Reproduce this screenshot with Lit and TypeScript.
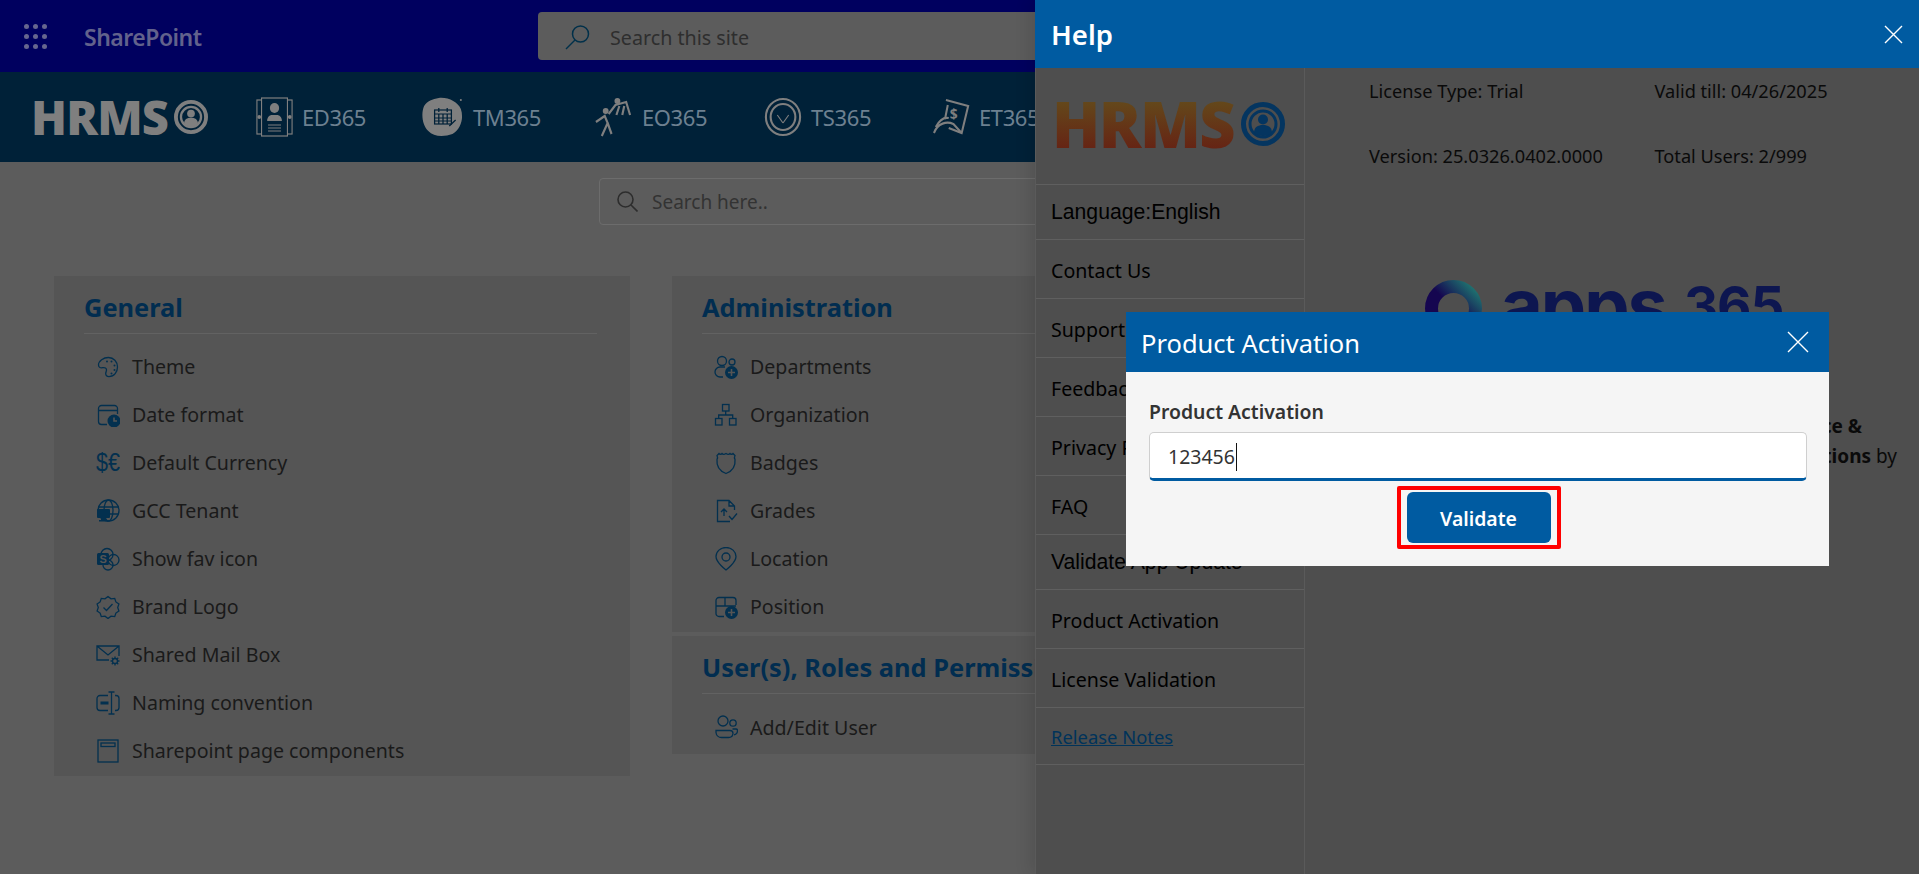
import { LitElement, html, css, svg } from 'lit';
import { customElement } from 'lit/decorators.js';

const icons: Record<string, unknown> = {
  theme: svg`<path d="M12.500 2.500c-5 0-10 3.300-10 7.600 0 2.600 2.200 3 4.200 2.600 2.200-.4 3.800.3 3.800 2.400 0 1.300-.8 2.100-.8 3.500 0 2 1.400 3 3.300 3 5.200 0 8.500-4.700 8.500-9.600 0-5.400-3.900-9.500-9-9.500z"/><g class="solid"><circle cx="11" cy="6.500" r="1"/><circle cx="15.500" cy="6.500" r="1"/><circle cx="18.500" cy="10.500" r="1"/><circle cx="18.500" cy="15" r="1"/><circle cx="15.500" cy="18.500" r="1"/></g>`,
  date: svg`<path d="M21.500 11V5.500a3 3 0 0 0-3-3h-13a3 3 0 0 0-3 3v13a3 3 0 0 0 3 3H11M2.500 7.500h19"/><circle class="solid" cx="18" cy="18" r="6.500"/><path class="cut" d="M18 14.500V18h3"/>`,
  currency: svg`<text class="glyph" x="0" y="20" font-size="26" textLength="24" lengthAdjust="spacingAndGlyphs">$€</text>`,
  globe: svg`<circle cx="12.500" cy="11.500" r="10.500"/><ellipse cx="12.500" cy="11.500" rx="4.500" ry="10.500"/><path d="M2 8h21M2.500 15h20"/><rect class="solid" x="1" y="10" width="13" height="9" rx="1"/><path class="solid" d="M5 19h5v2h2v1.500H3V21h2z"/>`,
  favicon: svg`<circle cx="11" cy="7.500" r="6"/><circle cx="17.500" cy="13" r="5.500"/><circle cx="12" cy="18" r="5"/><rect class="solid" x="1" y="6" width="12" height="12" rx="1.500"/><text class="cutglyph" x="3.500" y="16" font-size="11">S</text>`,
  badge: svg`<path d="M12 1.500l3 2.300 3.700-.4 1.200 3.500 3 2.200-1.200 3.400 1.200 3.400-3 2.200-1.200 3.500-3.700-.4-3 2.300-3-2.300-3.700.4-1.200-3.500-3-2.200 1.200-3.400-1.200-3.400 3-2.200 1.200-3.500 3.700.4z"/><path d="M7.500 12.500l3 3 6-6.500"/>`,
  mail: svg`<path d="M23 13V3H1v14h12M1 3l11 9 11-9"/><g><circle cx="19" cy="18" r="2.500"/><path d="M19 13.500v2M19 20.500v2M14.500 18h2M21.500 18h2M15.800 14.800l1.400 1.400M20.800 19.800l1.400 1.400M15.800 21.200l1.400-1.400M20.800 16.200l1.400-1.400"/></g>`,
  naming: svg`<path d="M12 4.500H4a3 3 0 0 0-3 3v9a3 3 0 0 0 3 3h8M19 4.500h1a3 3 0 0 1 3 3v9a3 3 0 0 1-3 3h-1M12.500 1h6M12.500 23h6M15.500 1v22"/><rect class="solid" x="4.500" y="10.500" width="8" height="3"/>`,
  page: svg`<rect x="2" y="1" width="20" height="22"/><rect x="5" y="4" width="14" height="3.500"/>`,
  departments: svg`<circle cx="8" cy="6" r="4.500"/><circle cx="18" cy="7" r="3"/><path d="M9 22H6a5 5 0 0 1 0-10h5"/><circle class="solid" cx="17.500" cy="17.500" r="6.500"/><path class="cut" d="M17.500 14v7M14 17.500h7"/>`,
  org: svg`<rect x="8.500" y="1.500" width="6.500" height="6.500"/><rect x="1.500" y="15.500" width="6.500" height="6.500"/><rect x="15.500" y="15.500" width="6.500" height="6.500"/><path d="M11.700 8v4M4.700 15.500V12h14v3.500"/>`,
  shield: svg`<path d="M5 2.500c1 1 2 1 3 0 1 1 2.500 1 4 0 1.500 1 3 1 4 0 1 1 2 1 3 0l2 2c-.8 1.500-.8 2.500 0 4 .6 6-2.500 11.500-9 14-6.500-2.500-9.600-8-9-14 .8-1.500.8-2.500 0-4z"/>`,
  grades: svg`<path d="M20.500 11V7l-5.500-5.500H3.500v21H16M15 1.500V7h5.500M10 17v-6.500M7 13l3-3 3 3M15 17l3 3.500 5-6"/>`,
  location: svg`<path d="M12 23S2 15.500 2 9.500a10 9 0 0 1 20 0C22 15.500 12 23 12 23z"/><circle cx="12" cy="10" r="4"/>`,
  position: svg`<path d="M10 21.500H5a3 3 0 0 1-3-3v-13a3 3 0 0 1 3-3h14a3 3 0 0 1 3 3V10M2 11h20M11 2.500V11"/><circle class="solid" cx="17.500" cy="17.500" r="6.500"/><path class="cut" d="M17.500 14v7M14 17.500h7"/>`,
  users: svg`<circle cx="9" cy="6" r="5"/><circle cx="19" cy="8" r="3.200"/><path d="M2 15.500h14a3 3 0 0 1 3 3 4.500 4.500 0 0 1-4.500 4h-7A5.500 5.500 0 0 1 2 17.500zM18.500 14H22a1.500 1.500 0 0 1 1.500 1.500c0 2.500-1.500 4-3.500 4.300"/>`,
};

const general = [
  ['theme', 'Theme'], ['date', 'Date format'], ['currency', 'Default Currency'], ['globe', 'GCC Tenant'],
  ['favicon', 'Show fav icon'], ['badge', 'Brand Logo'], ['mail', 'Shared Mail Box'],
  ['naming', 'Naming convention'], ['page', 'Sharepoint page components'],
];
const administration = [
  ['departments', 'Departments'], ['org', 'Organization'], ['shield', 'Badges'],
  ['grades', 'Grades'], ['location', 'Location'], ['position', 'Position'],
];
const helpLinks = [
  'Language:English', 'Contact Us', 'Support', 'Feedback', 'Privacy Policy', 'FAQ',
  'Validate App Update', 'Product Activation', 'License Validation',
];

// name, drawn width of the icon, art
const apps: [string, number, unknown][] = [
  ['ED365', 37, svg`<rect x="1" y="3" width="8" height="34"/><rect x="31" y="3" width="8" height="34"/><rect x="6" y="1" width="28" height="38" fill="#002138"/><circle class="f" cx="20" cy="11" r="5"/><path class="f" d="M12 24c0-4 3-6 5-6h6c2 0 5 2 5 6z"/><path d="M13 28h14M13 31h14M13 34h14"/><circle class="f" cx="3.500" cy="20" r="2"/><circle class="f" cx="36.500" cy="20" r="2"/>`],
  ['TM365', 42, svg`<path class="f" d="M16 1c9-1 18 4 21 11 3 9 0 20-8 25-8 3-18 3-23-3C0 28-1 16 2 9 5 4 10 2 16 1z"/><circle class="f" cx="37" cy="3" r="1"/><g stroke="#002138"><rect x="12" y="13" width="16" height="14" fill="none"/><path d="M12 17h16M16 11v4M24 11v4M12 21h16M12 24h16M16 17v10M20 17v10M24 17v10M26 29l6-6"/></g>`],
  ['EO365', 39, svg`<circle class="f" cx="12" cy="14" r="3"/><path class="w" d="M2 25l9-6 3 7-6 13M14 26l4 11"/><circle class="f" cx="24" cy="4" r="3"/><path class="w" d="M15 17l7-9 11-3 4 13M26 9l-3 9M31 9l-2 9"/>`],
  ['TS365', 38, svg`<circle class="w" cx="20" cy="20" r="18"/><circle class="w" cx="20" cy="20" r="13"/><path d="M20 26l-6-8M20 26l6-8"/>`],
  ['ET365', 37, svg`<path class="w" d="M14 3l24 6-7 27-14-5M13 22l3-14"/><text class="t" x="18" y="22" font-size="15">$</text><path class="w" d="M1 36c4-10 14-12 21-9l8 8M3 30c4-7 9-10 14-9"/>`],
];

const personCircle = svg`<circle cx="22" cy="22" r="19.500" fill="none" stroke-width="5"/><circle cx="22" cy="22" r="13" fill="none" stroke-width="3"/><circle class="p" cx="22" cy="17.500" r="5"/><path class="p" d="M13 31c0-6 4-8 9-8s9 2 9 8c-2 2-5 3-9 3s-7-1-9-3z"/>`;

@customElement('app-root')
export class AppRoot extends LitElement {
  static styles = css`
    :host {
      display: block;
      position: relative;
      width: 1919px;
      height: 874px;
      overflow: hidden;
      background: #5c5c5c;
      font-family: 'Noto Sans', sans-serif;
    }
    * {
      box-sizing: border-box;
    }
    svg {
      display: block;
      flex: none;
    }

    .suitebar {
      display: flex;
      align-items: center;
      height: 72px;
      background: #00005f;
    }
    .waffle {
      display: grid;
      grid-template-columns: repeat(3, 4px);
      gap: 5px;
      margin: 0 38px 0 24px;
    }
    .waffle i {
      width: 5px;
      height: 5px;
      border-radius: 50%;
      background: #66668f;
    }
    .brand {
      width: 454px;
      padding-top: 2px;
      color: #62628c;
      font-size: 23px;
      font-weight: 600;
      letter-spacing: -0.5px;
    }
    .sitesearch {
      display: flex;
      align-items: center;
      gap: 20px;
      width: 640px;
      height: 48px;
      padding: 2px 0 0 27px;
      border-radius: 4px;
      background: #5c5c5c;
      color: #2e2e2e;
      font-size: 19.700px;
    }
    .sitesearch svg {
      stroke: #00304a;
      fill: none;
      stroke-width: 1.500;
    }

    .appbar {
      display: flex;
      align-items: center;
      height: 90px;
      padding-left: 31px;
      background: #002138;
      color: #6d8090;
      overflow: hidden;
    }
    .hrms {
      display: flex;
      align-items: center;
      width: 225px;
      gap: 6px;
    }
    .hrms b {
      font-family: 'Open Sans', sans-serif;
      font-size: 47px;
      line-height: 1;
      font-weight: 800;
      letter-spacing: -0.800px;
      color: #7f7f7f;
    }
    .hrms svg {
      stroke: #7f7f7f;
    }
    .hrms .p {
      fill: #7f7f7f;
      stroke: none;
    }
    .app {
      display: flex;
      align-items: center;
      gap: 9px;
      width: 169px;
      flex: none;
      font-size: 22px;
      letter-spacing: -0.400px;
    }
    .app:nth-of-type(2) {
      width: 166px;
    }
    .app:nth-of-type(3) {
      width: 172px;
    }
    .app:nth-of-type(4) {
      width: 170px;
    }
    .app svg {
      fill: none;
      stroke: #7f7f7f;
      stroke-width: 1.200;
    }
    .app .w {
      stroke-width: 2.200;
    }
    .app .f {
      fill: #7f7f7f;
      stroke: none;
    }
    .app .t {
      fill: #7f7f7f;
      stroke: none;
      font-weight: 700;
    }

    .findrow {
      height: 114px;
      padding: 16px 0 0 599px;
    }
    .find {
      display: flex;
      align-items: center;
      gap: 14px;
      width: 740px;
      height: 47px;
      padding-left: 17px;
      border: 1px solid #6c6c6c;
      border-radius: 4px;
      color: #333;
      font-size: 19px;
    }
    .find svg {
      fill: none;
      stroke: #2d2d2d;
      stroke-width: 1.600;
    }

    .columns {
      display: grid;
      grid-template-columns: 576px 576px;
      gap: 42px;
      padding-left: 54px;
      align-items: start;
    }
    .stack {
      display: flex;
      flex-direction: column;
      gap: 4px;
    }
    .card {
      padding: 0 33px 1px 30px;
      background: #555;
    }
    .stack .card:last-child {
      padding-bottom: 3px;
    }
    .stack .card:last-child .row span {
      margin-bottom: 0;
    }
    .card h2 {
      display: flex;
      align-items: center;
      height: 58px;
      margin: 0 0 9px;
      padding-top: 5px;
      border-bottom: 1px solid #626262;
      color: #012d50;
      font-size: 25.400px;
      font-weight: 700;
      white-space: nowrap;
    }
    .row {
      display: flex;
      align-items: center;
      gap: 12px;
      height: 48px;
      padding-left: 12px;
      color: #1a1a1a;
      font-size: 19.600px;
    }
    .row span {
      margin-bottom: 2px;
    }
    .row svg {
      fill: none;
      stroke: #03304f;
      stroke-width: 1.300;
    }
    .row svg .solid {
      fill: #03304f;
      stroke: none;
    }
    .row svg .cut {
      stroke: #555;
      stroke-width: 1.600;
    }
    .row svg .glyph {
      fill: #03304f;
      stroke: none;
      font-family: 'Liberation Sans', sans-serif;
    }
    .row svg .cutglyph {
      fill: #555;
      stroke: none;
      font-weight: 700;
      font-family: 'Liberation Sans', sans-serif;
    }

    .panel {
      position: absolute;
      top: 0;
      right: 0;
      bottom: 0;
      left: 1035px;
      display: flex;
      flex-direction: column;
      background: #4e4e4e;
      box-shadow: -6px 0 14px rgba(0, 0, 0, 0.1);
    }
    .panel > header {
      display: flex;
      align-items: center;
      justify-content: space-between;
      flex: none;
      height: 68px;
      padding: 0 16px;
      background: #005ba1;
      color: #fff;
      font-size: 27.500px;
      font-weight: 600;
    }
    .panel-body {
      display: flex;
      flex: 1;
    }
    .side {
      flex: none;
      width: 270px;
      border-left: 1px solid #5a5a5a;
      border-right: 1px solid #5a5a5a;
    }
    .sidelogo {
      display: flex;
      align-items: center;
      gap: 7px;
      height: 117px;
      padding: 0 0 5px 16px;
      border-bottom: 1px solid #5f5f5f;
    }
    .sidelogo b {
      font-family: 'Open Sans', sans-serif;
      font-size: 63px;
      line-height: 1;
      font-weight: 800;
      letter-spacing: -1.500px;
      color: transparent;
      background: linear-gradient(#634f1c, #661f13);
      background-clip: text;
      -webkit-background-clip: text;
    }
    .sidelogo svg {
      stroke: #043560;
    }
    .sidelogo .p {
      fill: #043560;
      stroke: none;
    }
    .sidelink {
      display: flex;
      align-items: center;
      height: 59px;
      padding: 2px 0 0 15px;
      border-bottom: 1px solid #5f5f5f;
      color: #000;
      font-size: 19.600px;
    }
    .sidelink.arial {
      height: 55px;
      padding-top: 0;
      font-family: 'Liberation Sans', sans-serif;
      font-size: 21.200px;
    }
    .sidelink.notes {
      height: 57px;
      padding-top: 0;
      color: #00335a;
      text-decoration: underline;
      font-size: 18.400px;
    }

    .about {
      flex: 1;
      padding: 10px 22px 0 64px;
      color: #0a0a0a;
      font-size: 18.200px;
    }
    .facts {
      display: grid;
      grid-template-columns: 285.500px auto;
      row-gap: 39px;
      line-height: 26px;
    }
    .wordmark {
      display: flex;
      align-items: flex-start;
      height: 131px;
      margin: 111px 0 0 56px;
      color: #0d1650;
      font-family: 'Inter', sans-serif;
      font-weight: 700;
      line-height: 1;
    }
    .wordmark svg {
      margin-right: 19px;
    }
    .wordmark span {
      font-size: 72px;
      margin: -11px 18px 0 0;
      letter-spacing: -2px;
    }
    .wordmark em {
      font-style: normal;
      font-size: 53px;
      letter-spacing: -1px;
    }
    .pitch {
      margin: 0;
      text-align: right;
      font-size: 19px;
      line-height: 30px;
    }
    .pitch .first {
      margin-right: 35px;
      font-weight: 700;
    }

    .modal {
      position: absolute;
      top: 312px;
      left: 1126px;
      width: 703px;
      height: 254px;
      background: #f5f5f5;
    }
    .modal > header {
      display: flex;
      align-items: center;
      justify-content: space-between;
      height: 60px;
      padding: 2px 20px 0 15px;
      background: #005ba1;
      color: #fff;
      font-size: 25.500px;
    }
    .modal > header svg {
      margin-top: -2px;
    }
    .modal-body {
      display: flex;
      flex-direction: column;
      padding: 27px 22px 0 23px;
    }
    .modal label {
      margin-bottom: 7px;
      color: #333;
      font-size: 19.400px;
      line-height: 26px;
      font-weight: 600;
    }
    .field {
      display: flex;
      align-items: center;
      height: 49px;
      padding: 2px 0 0 18px;
      border: 1px solid #cfcfcf;
      border-bottom: 3px solid #005ba1;
      border-radius: 5px;
      background: #fff;
      color: #333;
      font-size: 19.500px;
    }
    .caret {
      width: 1px;
      height: 28px;
      margin-left: 1px;
      background: #111;
    }
    .actions {
      display: flex;
      justify-content: center;
      margin-top: 5px;
      padding-left: 1px;
    }
    .highlight {
      padding: 2px 6px;
      border: 4px solid #f00;
      border-radius: 2px;
    }
    .highlight button {
      display: block;
      width: 144px;
      height: 51px;
      padding: 2px 0 0;
      border: 0;
      border-radius: 6px;
      background: #005ba1;
      color: #fff;
      font: 600 19.400px 'Noto Sans', sans-serif;
    }
    .x {
      stroke: #fff;
      stroke-width: 1.400;
      fill: none;
    }
  `;

  private renderRow(item: string[]) {
    return html`<div class="row">
      <svg width="24" height="24" viewBox="0 0 24 24">${icons[item[0]]}</svg>
      <span>${item[1]}</span>
    </div>`;
  }

  render() {
    return html`
      <div class="suitebar">
        <div class="waffle">${Array.from({ length: 9 }, () => html`<i></i>`)}</div>
        <div class="brand">SharePoint</div>
        <div class="sitesearch">
          <svg width="25" height="25" viewBox="0 0 25 25"><circle cx="15.500" cy="9" r="8"/><path d="M10 15L1 24"/></svg>
          Search this site
        </div>
      </div>
      <div class="appbar">
        <div class="hrms">
          <b>HRMS</b>
          <svg width="34" height="36" viewBox="0 0 44 44">${personCircle}</svg>
        </div>
        ${apps.map(
          ([name, width, art]) => html`<div class="app">
            <svg width=${width} height="40" viewBox="0 0 40 40" preserveAspectRatio="none">${art}</svg>
            <span>${name}</span>
          </div>`,
        )}
      </div>
      <div class="findrow">
        <div class="find">
          <svg width="21" height="21" viewBox="0 0 21 21"><circle cx="8.500" cy="8.500" r="7.500"/><path d="M14 14l6.500 6.500"/></svg>
          Search here..
        </div>
      </div>
      <div class="columns">
        <section class="card">
          <h2>General</h2>
          ${general.map((item) => this.renderRow(item))}
        </section>
        <div class="stack">
          <section class="card">
            <h2>Administration</h2>
            ${administration.map((item) => this.renderRow(item))}
          </section>
          <section class="card">
            <h2>User(s), Roles and Permissions</h2>
            ${this.renderRow(['users', 'Add/Edit User'])}
          </section>
        </div>
      </div>

      <aside class="panel">
        <header>
          Help
          <svg class="x" width="19" height="19" viewBox="0 0 19 19"><path d="M1 1l17 17M18 1L1 18"/></svg>
        </header>
        <div class="panel-body">
          <nav class="side">
            <div class="sidelogo">
              <b>HRMS</b>
              <svg width="44" height="44" viewBox="0 0 44 44">${personCircle}</svg>
            </div>
            ${helpLinks.map(
              (link) =>
                html`<div class="sidelink ${link === 'Language:English' || link === 'Validate App Update' ? 'arial' : ''}">${link}</div>`,
            )}
            <div class="sidelink notes">Release Notes</div>
          </nav>
          <div class="about">
            <div class="facts">
              <span>License Type: Trial</span>
              <span>Valid till: 04/26/2025</span>
              <span>Version: 25.0326.0402.0000</span>
              <span>Total Users: 2/999</span>
            </div>
            <div class="wordmark">
              <svg width="57" height="57" viewBox="0 0 57 57">
                <defs>
                  <linearGradient id="ring" x1="1" y1="0" x2="0" y2="1">
                    <stop offset="0" stop-color="#1f7a72" />
                    <stop offset="0.5" stop-color="#150650" />
                  </linearGradient>
                </defs>
                <circle cx="28.500" cy="28.500" r="22" fill="none" stroke="url(#ring)" stroke-width="13" />
              </svg>
              <span>apps</span><em>365</em>
            </div>
            <p class="pitch">
              <span class="first">Empowering your HR Experience &amp;</span><br /><b>Streamlined HR Solutions</b> by
            </p>
          </div>
        </div>
      </aside>

      <div class="modal">
        <header>
          Product Activation
          <svg class="x" width="22" height="22" viewBox="0 0 22 22"><path d="M1 1l20 20M21 1L1 21"/></svg>
        </header>
        <div class="modal-body">
          <label>Product Activation</label>
          <div class="field">123456<span class="caret"></span></div>
          <div class="actions">
            <div class="highlight"><button>Validate</button></div>
          </div>
        </div>
      </div>
    `;
  }
}

declare global {
  interface HTMLElementTagNameMap {
    'app-root': AppRoot;
  }
}
